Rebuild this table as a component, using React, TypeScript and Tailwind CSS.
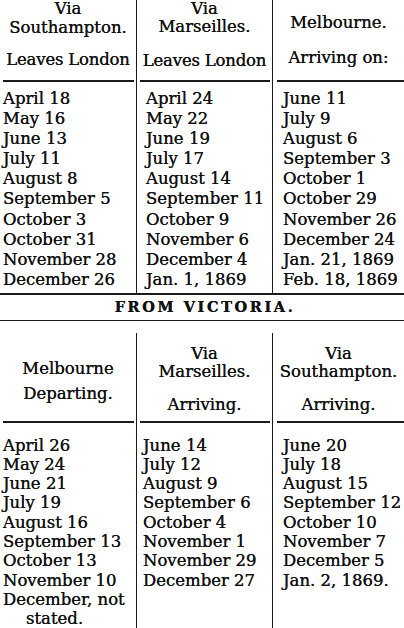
const serif = "font-['DejaVu_Serif','Liberation_Serif',serif]";

const fromLondon = {
  southampton: ['April 18', 'May 16', 'June 13', 'July 11', 'August 8', 'September 5', 'October 3', 'October 31', 'November 28', 'December 26'],
  marseilles: ['April 24', 'May 22', 'June 19', 'July 17', 'August 14', 'September 11', 'October 9', 'November 6', 'December 4', 'Jan. 1, 1869'],
  melbourne: ['June 11', 'July 9', 'August 6', 'September 3', 'October 1', 'October 29', 'November 26', 'December 24', 'Jan. 21, 1869', 'Feb. 18, 1869'],
};

const fromVictoria = {
  melbourne: ['April 26', 'May 24', 'June 21', 'July 19', 'August 16', 'September 13', 'October 13', 'November 10', 'December, not'],
  marseilles: ['June 14', 'July 12', 'August 9', 'September 6', 'October 4', 'November 1', 'November 29', 'December 27'],
  southampton: ['June 20', 'July 18', 'August 15', 'September 12', 'October 10', 'November 7', 'December 5', 'Jan. 2, 1869.'],
};

function Rule({ className = '' }: { className?: string }) {
  return <div className={`h-[1.5px] bg-[#1a1a1a] ${className}`} />;
}

function TopRows({ items, pad }: { items: string[]; pad: string }) {
  return (
    <div className={`pt-[7px] ${pad}`}>
      {items.map(d => (
        <div key={d} className="h-[20.2px] leading-[20.2px] whitespace-nowrap">{d}</div>
      ))}
    </div>
  );
}

function BottomRows({ items, pad, extra }: { items: string[]; pad: string; extra?: React.ReactNode }) {
  return (
    <div className={`pt-[13px] ${pad}`}>
      {items.map(d => (
        <div key={d} className="h-[19.3px] leading-[19.3px] whitespace-nowrap">{d}</div>
      ))}
      {extra}
    </div>
  );
}

export default function App() {
  return (
    <div className={`w-[404px] h-[628px] overflow-hidden bg-white text-[#111] text-[16.5px] ${serif} [text-shadow:0_0_0.5px_#111]`}>
      {/* From London */}
      <div className="flex h-[293px]">
        <div className="w-[137px] border-r-[1.5px] border-[#1a1a1a] flex flex-col">
          <div className="h-[80px] flex flex-col items-center">
            <div className="leading-[17px] h-[17px]">Via</div>
            <div className="leading-[20px] mt-[1px]">Southampton.</div>
            <div className="leading-[20px] mt-[12px] whitespace-nowrap tracking-[-0.2px]">Leaves London</div>
          </div>
          <Rule className="ml-[3px] mr-[2px]" />
          <TopRows items={fromLondon.southampton} pad="pl-[3px]" />
        </div>
        <div className="w-[136px] border-r-[1.5px] border-[#1a1a1a] flex flex-col">
          <div className="h-[80px] flex flex-col items-center">
            <div className="leading-[17px] h-[17px]">Via</div>
            <div className="leading-[20px]">Marseilles.</div>
            <div className="leading-[20px] mt-[14px] whitespace-nowrap tracking-[-0.2px]">Leaves London</div>
          </div>
          <Rule className="ml-[3px] mr-[2px]" />
          <TopRows items={fromLondon.marseilles} pad="pl-[9px]" />
        </div>
        <div className="flex-1 flex flex-col">
          <div className="h-[80px] flex flex-col items-center">
            <div className="leading-[20px] mt-[13px]">Melbourne.</div>
            <div className="leading-[20px] mt-[15px] whitespace-nowrap">Arriving on:</div>
          </div>
          <Rule className="ml-[4px]" />
          <TopRows items={fromLondon.melbourne} pad="pl-[10px]" />
        </div>
      </div>

      <Rule />
      <div className="h-[25px] flex items-center justify-center text-[14.5px] font-bold tracking-[2.6px] pl-[6px]">FROM VICTORIA.</div>
      <Rule />

      {/* From Victoria */}
      <div className="flex mt-[12px] h-[296px]">
        <div className="w-[137px] border-r-[1.5px] border-[#1a1a1a] flex flex-col">
          <div className="h-[88px] flex flex-col items-center">
            <div className="leading-[20px] mt-[26px]">Melbourne</div>
            <div className="leading-[20px] mt-[5px]">Departing.</div>
          </div>
          <Rule className="ml-[3px] mr-[2px]" />
          <BottomRows
            items={fromVictoria.melbourne}
            pad="pl-[3px]"
            extra={<div className="h-[19.3px] leading-[19.3px] pl-[23px]">stated.</div>}
          />
        </div>
        <div className="w-[136px] border-r-[1.5px] border-[#1a1a1a] flex flex-col">
          <div className="h-[88px] flex flex-col items-center">
            <div className="leading-[18px] mt-[12px]">Via</div>
            <div className="leading-[18px]">Marseilles.</div>
            <div className="leading-[20px] mt-[14px]">Arriving.</div>
          </div>
          <Rule className="ml-[3px] mr-[2px]" />
          <BottomRows items={fromVictoria.marseilles} pad="pl-[6px]" />
        </div>
        <div className="flex-1 flex flex-col">
          <div className="h-[88px] flex flex-col items-center">
            <div className="leading-[18px] mt-[12px]">Via</div>
            <div className="leading-[18px]">Southampton.</div>
            <div className="leading-[20px] mt-[14px]">Arriving.</div>
          </div>
          <Rule className="ml-[4px]" />
          <BottomRows items={fromVictoria.southampton} pad="pl-[10px]" />
        </div>
      </div>
    </div>
  );
}
